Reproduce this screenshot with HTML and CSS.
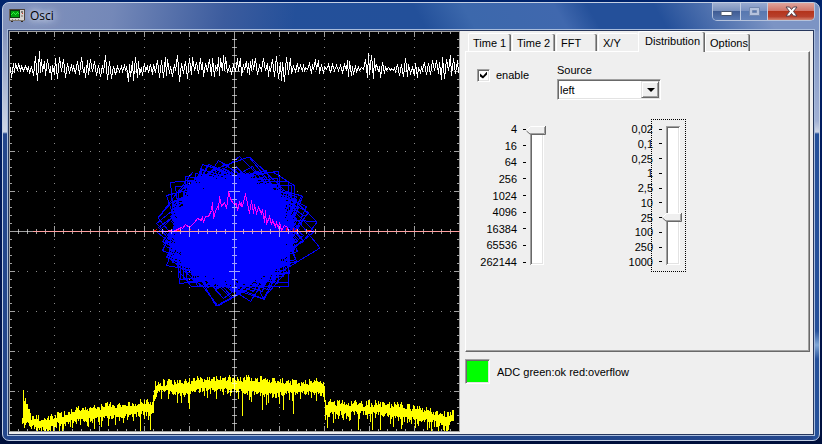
FILE: index.html
```html
<!DOCTYPE html>
<html lang="en">
<head>
<meta charset="utf-8">
<title>Osci</title>
<link rel="stylesheet" href="styles.css">
</head>
<body>
<main class="window">
  <header class="titlebar">
    <svg class="app-icon" viewBox="0 0 16 14" shape-rendering="crispEdges" aria-hidden="true">
      <rect x="0" y="0" width="16" height="12" fill="#d8d4d0"/>
      <rect x="0" y="0" width="16" height="1" fill="#4a4038"/>
      <rect x="0" y="0" width="1" height="12" fill="#6a6058"/>
      <rect x="15" y="0" width="1" height="12" fill="#4a4038"/>
      <rect x="0" y="11" width="16" height="1" fill="#807870"/>
      <rect x="1" y="1" width="10" height="8" fill="#0a3a10"/>
      <rect x="2" y="2" width="8" height="6" fill="#00a010"/>
      <path d="M2 5h1v1h-1zM3 4h1v1h-1zM4 3h1v1h-1zM5 4h1v1h-1zM6 5h1v1h-1zM7 4h1v1h-1zM8 3h1v1h-1zM9 4h1v1h-1z" fill="#30f040"/>
      <rect x="12" y="2" width="2" height="2" fill="#807870"/>
      <rect x="13" y="4" width="1" height="1" fill="#d03020"/>
      <rect x="12" y="6" width="2" height="2" fill="#a8a098"/>
      <path d="M3 10.500h1M6 10.500h1M9 10.500h1" stroke="#888"/>
      <path d="M2 12.500h2M12 12.500h2" stroke="#302820"/>
    </svg>
    <h1 class="title">Osci</h1>
    <div class="caption-buttons">
      <button class="caption" type="button" aria-label="Minimize">
        <svg viewBox="0 0 13 11"><rect x="1" y="5.500" width="11" height="4" rx="1" fill="#fff" stroke="#46546c"/></svg>
      </button>
      <button class="caption caption-max" type="button" aria-label="Maximize" disabled>
        <svg viewBox="0 0 13 11"><path fill-rule="evenodd" d="M1.500 1.500h10v8h-10zM4.500 4.500h4v2h-4z" fill="#b5c2dc" stroke="#7288b0"/></svg>
      </button>
      <button class="caption caption-close" type="button" aria-label="Close">
        <svg viewBox="0 0 13 11"><path d="M1 1h3.500l2 2.500 2-2.500H12L8.500 5.500 12 10H8.500l-2-2.500-2 2.500H1l3.500-4.500z" fill="#fff" stroke="#54404c"/></svg>
      </button>
    </div>
  </header>
  <div class="client">
    <section class="scope" aria-label="Oscilloscope screen">
      <svg id="screen" viewBox="0 0 451 401" shape-rendering="crispEdges">
        <rect width="451" height="401" fill="#000"/>
        <path id="dots" stroke="#888"/>
        <path id="figure-fill" fill="#00f"/>
        <path id="figure" fill="none" stroke="#00f"/>
        <path d="M24 200.500H451" stroke="#f00"/>
        <path id="tails" fill="none" stroke="#f00"/>
        <path id="distribution" fill="none" stroke="#f0f"/>
        <path id="time" fill="none" stroke="#fff"/>
        <path id="spectrum" fill="none" stroke="#ff0"/>
        <path id="axes" fill="none" stroke="#fff" stroke-opacity=".63"/>
      </svg>
    </section>
    <section class="side">
      <div class="tabs" role="tablist">
        <button class="tab" role="tab" type="button">Time 1</button>
        <button class="tab" role="tab" type="button">Time 2</button>
        <button class="tab" role="tab" type="button">FFT</button>
        <button class="tab tab-before" role="tab" type="button">X/Y</button>
        <button class="tab tab-active" role="tab" type="button" aria-selected="true">Distribution</button>
        <button class="tab" role="tab" type="button">Options</button>
      </div>
      <div class="page" role="tabpanel">
        <div class="options">
          <label class="enable"><input type="checkbox" checked><span>enable</span></label>
          <div class="source">
            <label for="source">Source</label>
            <div class="combo"><select id="source"><option>left</option><option>right</option></select></div>
          </div>
        </div>
        <div class="sliders">
          <div class="scale">
            <ol class="labels"><li>4</li><li>16</li><li>64</li><li>256</li><li>1024</li><li>4096</li><li>16384</li><li>65536</li><li>262144</li></ol>
            <input class="slider" type="range" min="0" max="8" value="0" aria-label="Samples">
          </div>
          <div class="scale scale-focus">
            <ol class="labels"><li>0,02</li><li>0,1</li><li>0,25</li><li>1</li><li>2,5</li><li>10</li><li>25</li><li>100</li><li>250</li><li>1000</li></ol>
            <input class="slider" type="range" min="0" max="9" value="6" aria-label="Vertical scale">
          </div>
        </div>
      </div>
      <div class="status"><span class="lamp"></span><span>ADC green:ok red:overflow</span></div>
    </section>
  </div>
</main>
<script src="scope.js"></script>
</body>
</html>
```
FILE: styles.css
```css
* { box-sizing: border-box; }

body {
  margin: 0;
  padding: 2px 2px 3px;
  background: linear-gradient(#00246c, #001450 60%, #00103c);
  font: 11px/14px "Liberation Sans", Arial, sans-serif;
  color: #000;
}

button, select, input { font: inherit; color: inherit; }

.window {
  display: flex;
  flex-direction: column;
  min-height: calc(100vh - 5px);
  padding: 0 4px 4px;
  border: 1px solid #c4d0e4;
  border-radius: 7px;
  background:
    linear-gradient(100deg, #8494bc 0, #7488b8 110px, #3c5c9e 220px, transparent 290px) 0 0 / 100% 28px no-repeat,
    linear-gradient(60deg, #24509a 30%, #23509a 51%, #3c68ac 57%, #4068ae 68%, #24509a 72%, #24509a 80%, #7c94c4 93%) 0 0 / 100% 28px no-repeat,
    linear-gradient(#8494bc, #cdd5e6 101px, #6c84b4 102px, #24468c 103px) 0 28px / 6px 100% no-repeat,
    linear-gradient(#8298c6, #a0b0d4 90px, #cdd5e6 101px, #24509a 103px, #24509a 300px, #80a8d8 314px, #24509a 328px) 100% 28px / 6px 100% no-repeat,
    linear-gradient(90deg, #24468c, #2c559c 30%, #1f4488 60%, #24468c);
}

.titlebar {
  display: flex;
  align-items: center;
  height: 26px;
  padding-left: 2px;
}

.app-icon { width: 16px; height: 14px; }

.title {
  margin: 0 0 0 5px;
  font: 12px/16px "Open Sans", sans-serif;
  text-shadow: 0 0 6px #fff, 0 0 10px #c8d4ec, 0 0 14px #c8d4ec;
}

.caption-buttons {
  display: flex;
  align-self: flex-start;
  margin-left: auto;
  border: 1px solid #b4c2dc;
  border-top: 0;
  border-radius: 0 0 5px 5px;
  overflow: hidden;
}

.caption {
  display: grid;
  place-items: center;
  width: 28px;
  height: 17px;
  padding: 0;
  border: 0;
  border-right: 1px solid #c0cce2;
  background: linear-gradient(#a0b0d0, #7890bc 48%, #405c94 50%, #5878b0);
}

.caption svg { width: 13px; height: 11px; }
.caption-max { width: 27px; background: linear-gradient(#98aad0, #7890c0 48%, #5878b0 50%, #6482b8); }
.caption-close {
  width: 46px;
  border: 0;
  background: linear-gradient(#e0a49c, #d07468 46%, #b4341c 50%, #b8402c 80%, #d48470);
}

.client {
  flex: 1;
  display: grid;
  grid-template-columns: 451fr 353fr;
  border: 1px solid #26365c;
  outline: 1px solid #a8bcdc;
  margin: 1px;
  background: #efefef;
}

.scope svg { display: block; width: 100%; }

.side { padding: 0 3px 0 5px; }

.tabs {
  display: grid;
  grid-template-columns: 44px 44px 42px 40px 67px 46px;
  align-items: end;
  padding-left: 3px;
}

.tab {
  height: 18px;
  margin-right: 1px;
  padding: 0 0 0 4px;
  border: 0;
  border-top: 1px solid #fff;
  border-left: 1px solid #fff;
  border-radius: 2px 2px 0 0;
  background: #efefef;
  box-shadow: inset -1px 0 #696969, inset -2px 0 #a0a0a0;
  text-align: left;
  white-space: nowrap;
}
.tab-before { margin-right: 0; box-shadow: none; }
.tab-active {
  position: relative;
  height: 21px;
  margin: 0 0 -1px;
  padding: 0 0 3px 6px;
}

.page {
  min-height: 301px;
  border: 1px solid;
  border-color: #fff #696969 #696969 #fff;
  box-shadow: inset -1px -1px #a0a0a0;
}

.options { display: flex; padding: 11px 11px 0; }

.enable { display: flex; align-items: center; width: 80px; height: 24px; gap: 6px; }

.enable input {
  appearance: none;
  display: grid;
  width: 13px;
  height: 13px;
  margin: 0;
  background: #fff;
  border: 1px solid;
  border-color: #a0a0a0 #fff #fff #a0a0a0;
  box-shadow: inset 1px 1px #696969, inset -1px -1px #e3e3e3;
}
.enable input:checked::after {
  content: "";
  width: 7px;
  height: 7px;
  margin: 2px;
  background: #000;
  clip-path: polygon(0 29%, 43% 65%, 100% 0, 100% 43%, 43% 100%, 0 71%);
}

.source label { display: block; }

.combo { position: relative; width: 104px; margin-top: 2px; }
.combo select {
  appearance: none;
  display: block;
  width: 100%;
  height: 21px;
  padding: 0 18px 0 2px;
  border: 1px solid;
  border-color: #a0a0a0 #fff #fff #a0a0a0;
  border-radius: 0;
  box-shadow: inset 1px 1px #696969, inset -1px -1px #e3e3e3;
  background: #fff;
}
.combo::before {
  content: "";
  position: absolute;
  inset: 2px 2px 2px auto;
  width: 16px;
  border: 1px solid;
  border-color: #e3e3e3 #696969 #696969 #e3e3e3;
  box-shadow: inset 1px 1px #fff, inset -1px -1px #a0a0a0;
  background: #efefef;
  pointer-events: none;
}
.combo::after {
  content: "";
  position: absolute;
  top: 9px;
  right: 6px;
  border: 4px solid transparent;
  border-top-color: #000;
  border-bottom: 0;
}

.sliders { display: flex; gap: 66px; padding: 22px 0 20px 11px; }

.scale { position: relative; display: flex; align-items: center; gap: 1px; }

.labels {
  display: flex;
  flex-direction: column;
  justify-content: space-between;
  width: 49px;
  height: 147px;
  margin: 0;
  padding: 0;
  list-style: none;
}
.labels li { display: flex; justify-content: flex-end; align-items: center; }
.labels li::after { content: ""; width: 3px; height: 1px; margin-left: 6px; background: #000; }

.slider {
  appearance: none;
  writing-mode: vertical-lr;
  width: 20px;
  height: 139px;
  margin: 0;
  background: none;
  outline: 0;
}
.slider::-webkit-slider-runnable-track {
  width: 14px;
  height: 139px;
  background: #fff;
  border: 0;
  box-shadow: inset 1px 1px #a0a0a0, inset -1px -1px #fff, inset 2px 2px #696969, inset -2px -2px #e3e3e3;
}
.slider::-webkit-slider-thumb {
  appearance: none;
  width: 20px;
  height: 9px;
  margin-left: -4px;
  background: url("data:image/svg+xml,%3Csvg xmlns='http://www.w3.org/2000/svg' width='20' height='9'%3E%3Cpath d='M0 4.500L4 0H20V9H4z' fill='%23efefef'/%3E%3Cpath d='M.5 4.500L4.500.5H19' fill='none' stroke='%23fff'/%3E%3Cpath d='M4 7.500H18.500V1' fill='none' stroke='%23a0a0a0'/%3E%3Cpath d='M.5 5L4.500 8.500H19.500V0' fill='none' stroke='%23696969'/%3E%3C/svg%3E") no-repeat;
}

.scale-focus::before {
  content: "";
  position: absolute;
  inset: -3px -3px -3px auto;
  width: 33px;
  border: 1px dotted #000;
  pointer-events: none;
}

.status { display: flex; align-items: center; gap: 7px; margin-top: 7px; }
.lamp {
  width: 25px;
  height: 25px;
  border: 1px solid;
  border-color: #a0a0a0 #fff #fff #a0a0a0;
  box-shadow: inset 1px 1px #696969, inset -1px -1px #e3e3e3;
  background: #0f0;
}
```
FILE: scope.js
```js
const CX = 225, CY = 200;

// Repeatable noise, so the screen is the same on every load.
let seed = 7;
function rnd() {
  seed = (seed + 0x6d2b79f5) | 0;
  let t = Math.imul(seed ^ (seed >>> 15), 1 | seed);
  t = (t + Math.imul(t ^ (t >>> 7), 61 | t)) ^ t;
  return ((t ^ (t >>> 14)) >>> 0) / 4294967296;
}

function draw(id, d) {
  document.getElementById(id).setAttribute("d", d);
}

// Linear interpolation in a table of rows [x, value, value...].
function at(table, x, col) {
  for (let i = 1; i < table.length; i++) {
    if (x <= table[i][0]) {
      const a = table[i - 1], b = table[i];
      return a[col] + (b[col] - a[col]) * (x - a[0]) / (b[0] - a[0]);
    }
  }
  return table[table.length - 1][col];
}

// Graticule: 10 x 10 divisions, five parts each.
let dots = "", axes = "";
for (let x = 45; x < 450; x += 45) for (let y = 8; y < 400; y += 8) dots += `M${x} ${y}.5h1`;
for (let y = 40; y < 400; y += 40) for (let x = 9; x < 450; x += 9) dots += `M${x} ${y}.5h1`;
axes += `M.5 0V401M450.500 0V401M1 .5H450M1 400.500H450M${CX}.5 1V400M1 ${CY}.5H450`;
for (let x = 9; x < 450; x += 9) {
  const big = x % 45 === 0, e = big ? 5 : 2, c = big ? 5 : 2;
  axes += `M${x}.5 1v${e}M${x}.5 ${400 - e}v${e}M${x}.5 ${CY - c}v${2 * c + 1}`;
}
for (let y = 8; y < 400; y += 8) {
  const big = y % 40 === 0, e = big ? 5 : 2, c = big ? 5 : 2;
  axes += `M1 ${y}.5h${e}M${450 - e} ${y}.5h${e}M${CX - c} ${y}.5h${2 * c + 1}`;
}
draw("dots", dots);
draw("axes", axes);

// Time signal: [x, swing up, swing down].
const swing = [[0,9,8],[12,4,5],[22,9,7],[29,18,17],[40,9,8],[50,14,16],[58,7,5],[64,2,2],[69,12,10],[76,11,8],
  [85,9,8],[97,13,15],[104,5,6],[112,8,5],[122,14,13],[136,5,5],[146,9,10],[154,15,8],[163,8,9],[172,14,14],[185,10,7],
  [196,8,7],[205,9,8],[215,11,11],[225,10,8],[240,7,6],[253,12,10],[262,8,6],[272,15,14],[278,20,20],[284,9,5],
  [292,3,3],[300,4,3],[307,10,9],[320,6,4],[332,3,3],[340,8,8],[350,7,5],[359,16,12],[369,10,9],[376,6,4],
  [385,3,3],[393,9,8],[401,8,10],[415,7,6],[426,7,5],[433,12,13],[442,12,12],[450,5,5]];
let time = "M0.5 36.500", up = true;
for (let x = 1; x < 450; x += rnd() < 0.45 ? 1 : 2) {
  const a = at(swing, x, up ? 1 : 2) * (0.1 + 1.1 * rnd());
  time += `L${x}.5 ${Math.round(37 + (up ? -a : a))}.5`;
  up = !up;
}
draw("time", time);

// Spectrum: [x, top, bottom] and the deep notches [x, bottom].
const band = [[13,387,392],[14,360,390],[15,368,390],[19,378,392],[22,388,394],[30,387,396],[38,387,397],[50,384,391],[70,379,388],
  [100,375,385],[122,374,384],[133,371,380],[142,371,381],[143,368,380],[146,353,364],[149,352,358],[175,351,362],
  [190,349,358],[225,348,358],[240,348,360],[262,350,363],[285,352,360],[313,351,362],[315,354,370],[316,371,382],
  [335,373,381],[361,373,380],[391,375,386],[420,380,388],[435,384,393],[445,382,389]];
let spectrum = "";
for (let x = 13; x <= 444; x++) {
  const t = at(band, x, 1) + 7 * rnd() - 4;
  const b = at(band, x, 2) + 5 * rnd() - 1 + (rnd() < 0.3 ? 9 * rnd() : 0);
  spectrum += `M${x}.5 ${Math.round(t)}V${Math.min(400, Math.round(b))}`;
}
for (const [x, y] of [[27,399],[30,399],[36,400],[50,400],[114,387],[131,400],[141,399],[168,372],[180,378],
  [179,372],[207,368],[233,385],[253,379],[257,374],[274,379],[284,383],[318,397],[341,389],[349,399],[363,399],
  [371,399],[392,398],[393,394],[408,393],[435,400],[437,400],[440,392]]) {
  spectrum += `M${x}.5 ${Math.round(at(band, x, 1)) + 3}V${y}`;
}
draw("spectrum", spectrum);

// X/Y figure: a dense core with turning squares around it.
draw("figure-fill", "M181 170L194 158L208 152L224 148L240 150L258 159L272 174L277 194L277 215L272 230L260 242L244 248L222 250L200 246L182 236L172 222L169 202L171 184z");
let figure = "";
for (let i = 0; i < 90; i++) {
  const r = 60 + 20 * rnd() * rnd(), t = rnd() * Math.PI, k = 0.85 + 0.2 * rnd();
  const ox = 224 + 10 * (rnd() - 0.5), oy = 199 + 8 * (rnd() - 0.5);
  for (let n = 0; n < 4; n++) {
    const a = t + n * Math.PI / 2, q = n % 2 ? k : 1;
    figure += `${n ? "L" : "M"}${Math.round(ox + r * q * Math.cos(a))}.5 ${Math.round(oy + 0.93 * r * q * Math.sin(a))}.5`;
  }
  figure += "z";
}
figure += "M149 187L162 172L205 150M149 187L175 218L207 275L248 253M149 187L184 141M195 257L209 275L252 251" +
  "M168 162L206 138L240 126L264 155M181 151L206 139L254 268L278 240M241 126L308 191L296 208" +
  "M286 155V155L264 141L230 147M286 155L285 189L308 191M279 150V255H182L169 239V162L182 150z" +
  "M311 217L285 185M311 217L270 242L254 268L212 254M162 206L160 227L195 257";
draw("figure", figure);

// Distribution curve, with the sparse tails in red.
const curve = [[156,200],[161,199],[164,200],[168,198],[172,196],[173,197],[176,193],[180,196],[185,191],[188,187],
  [190,188],[192,189],[193,185],[194,191],[196,185],[199,185],[202,179],[203,171],[204,187],[206,180],[209,173],
  [209,178],[210,165],[212,175],[215,171],[217,177],[218,171],[219,160],[221,167],[223,171],[225,173],[227,172],
  [228,179],[230,171],[232,175],[232,171],[233,175],[235,166],[236,163],[238,172],[240,182],[242,169],[244,182],
  [245,173],[247,182],[249,176],[252,182],[253,178],[255,191],[256,179],[257,193],[260,185],[262,193],[263,189],
  [266,195],[267,191],[269,197],[270,191],[272,199],[275,194],[278,196],[279,200]];
draw("distribution", "M" + curve.map(([x, y]) => `${x}.5 ${y}.5`).join("L") + "M153 200.500h5M300 200.500h4");
draw("tails", "M145 199.500h2M147 198.500h1M168 199.500h4M180 198.500h2M277 199.500v-3M284 199.500v-3M286 199.500h3M287 198.500h1M298 199.500h4");
```
